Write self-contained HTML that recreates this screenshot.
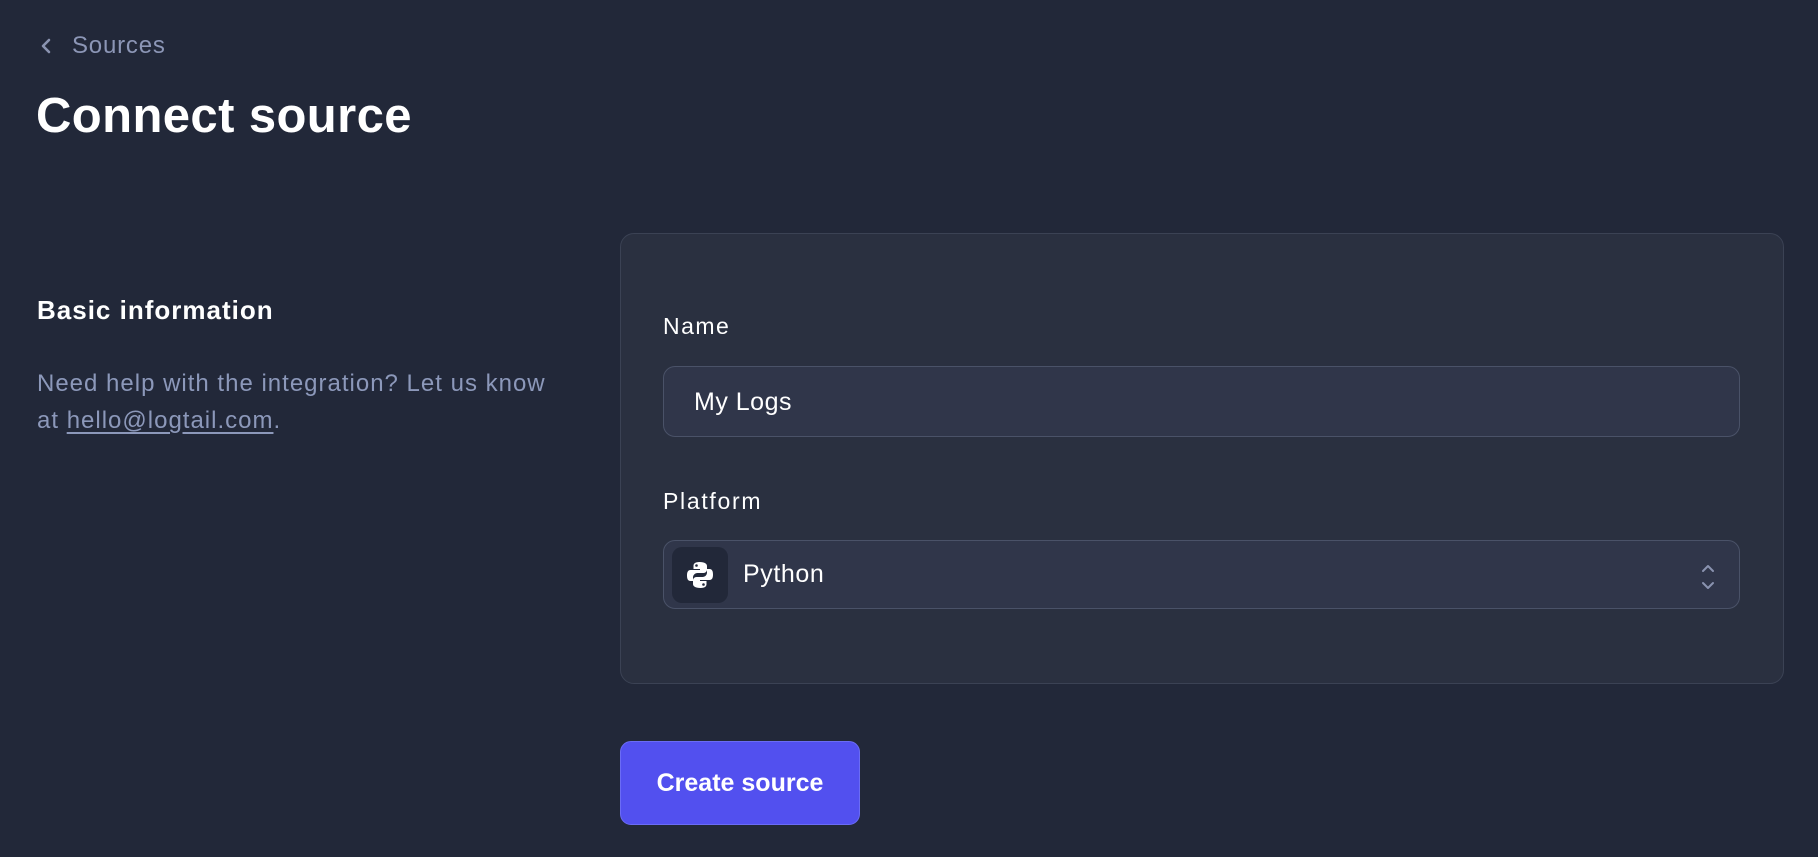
<!DOCTYPE html>
<html><head><meta charset="utf-8"><style>
*{margin:0;padding:0;box-sizing:border-box}
html,body{width:1818px;height:857px;background:#222839;overflow:hidden;font-family:"Liberation Sans",sans-serif;color:#fff}
.abs{position:absolute}
</style></head><body>
<svg class="abs" style="left:39px;top:37px" width="14" height="18" viewBox="0 0 14 18"><path d="M10 3 L4 9 L10 15" fill="none" stroke="#8a93b0" stroke-width="2.6" stroke-linecap="round" stroke-linejoin="round"/></svg>
<div class="abs" style="left:72px;top:31px;font-size:24px;color:#8c96b6;line-height:30px;letter-spacing:0.8px">Sources</div>
<div class="abs" style="left:36px;top:86px;font-size:49px;font-weight:bold;line-height:60px;letter-spacing:0.4px">Connect source</div>
<div class="abs" style="left:37px;top:294px;font-size:26px;font-weight:bold;line-height:32px;letter-spacing:1px">Basic information</div>
<div class="abs" style="left:37px;top:365px;font-size:24px;color:#8c98ba;line-height:37px;width:620px;letter-spacing:1px">Need help with the integration? Let us know<br>at <span style="text-decoration:underline;text-underline-offset:4px">hello@logtail.com</span>.</div>
<div class="abs" style="left:620px;top:233px;width:1164px;height:451px;background:#2a3040;border:1px solid #3b4254;border-radius:14px"></div>
<div class="abs" style="left:663px;top:312px;font-size:23px;font-weight:500;line-height:28px;letter-spacing:1.5px">Name</div>
<div class="abs" style="left:663px;top:366px;width:1077px;height:71px;background:#30364a;border:1px solid #4a5268;border-radius:12px"></div>
<div class="abs" style="left:694px;top:387px;font-size:25px;line-height:30px;letter-spacing:0.5px">My Logs</div>
<div class="abs" style="left:663px;top:487px;font-size:23px;font-weight:500;line-height:28px;letter-spacing:1.7px">Platform</div>
<div class="abs" style="left:663px;top:540px;width:1077px;height:69px;background:#30364a;border:1px solid #4a5268;border-radius:12px"></div>
<div class="abs" style="left:672px;top:547px;width:56px;height:56px;background:#222839;border-radius:10px"></div>
<svg class="abs" style="left:685px;top:560px" width="30" height="30" viewBox="0 0 30 30"><path d="M14.5 2c-5 0-6 2-6 4v3h6.5v1H5.5C3 10 2 12 2 15.5S3 21 5.5 21H8v-3.5c0-2.5 2-4.5 4.5-4.5h6c2 0 3.5-1.5 3.5-3.5V6c0-2-2-4-7.5-4z" fill="#fff"/><path d="M15.5 28c5 0 6-2 6-4v-3H15v-1h9.5c2.5 0 3.5-2 3.5-5.5S27 9 24.5 9H22v3.5c0 2.5-2 4.5-4.5 4.5h-6C9.5 17 8 18.5 8 20.5V24c0 2 2 4 7.5 4z" fill="#fff"/><circle cx="11.5" cy="5.5" r="1.3" fill="#222839"/><circle cx="18.5" cy="24.5" r="1.3" fill="#222839"/></svg>
<div class="abs" style="left:743px;top:559px;font-size:25px;line-height:30px;letter-spacing:0.6px">Python</div>
<svg class="abs" style="left:1700px;top:561px" width="16" height="32" viewBox="0 0 16 32"><path d="M3 10 L8 5 L13 10 M3 22 L8 27 L13 22" fill="none" stroke="#8a93b0" stroke-width="2" stroke-linecap="round" stroke-linejoin="round"/></svg>
<div class="abs" style="left:620px;top:741px;width:240px;height:84px;background:#5250ef;border:1px solid #6b6cf5;border-radius:11px;font-size:25px;font-weight:bold;line-height:82px;text-align:center">Create source</div>
</body></html>
